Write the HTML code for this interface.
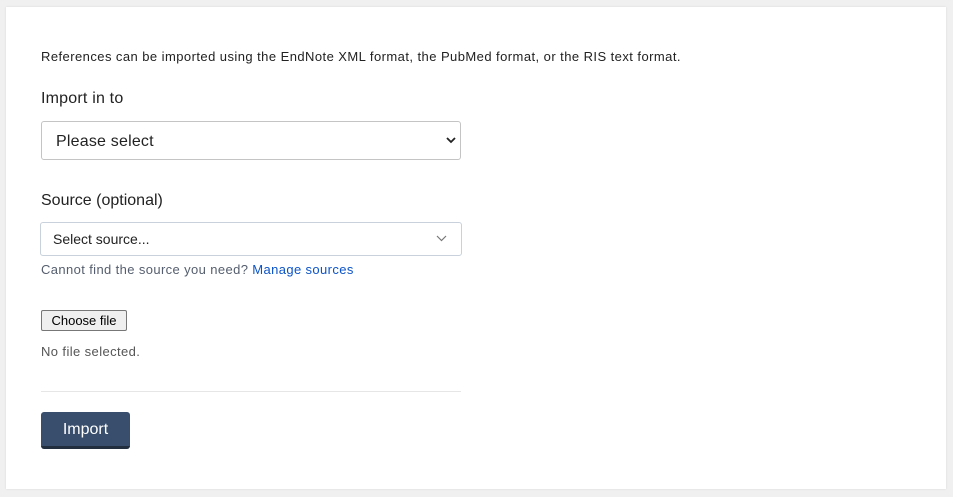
<!DOCTYPE html>
<html><head><style>
body{margin:0;width:953px;height:497px;background:#f0f0f0;font-family:"Liberation Sans",sans-serif;position:relative;overflow:hidden}
.card{position:absolute;left:6px;top:7px;width:940px;height:482px;background:#fff;box-shadow:0 0 2px rgba(0,0,0,.1)}
.a{position:absolute;white-space:nowrap}
</style></head><body>
<div class="card"></div>
<div class="a" style="left:41px;top:49px;font-size:13px;color:#222;letter-spacing:0.44px">References can be imported using the EndNote XML format, the PubMed format, or the RIS text format.</div>
<div class="a" style="left:41px;top:90px;font-size:16px;color:#222;letter-spacing:0.2px">Import in to</div>
<div class="a" style="left:41px;top:121px;width:418px;height:37px;border:1px solid #c4c4c4;border-radius:3px;"></div>
<div class="a" style="left:56px;top:133px;font-size:16px;color:#222;letter-spacing:0.2px">Please select</div>
<svg class="a" style="left:446px;top:136px" width="10" height="8"><path d="M1 2l4 4 4-4" stroke="#222" stroke-width="1.8" fill="none"/></svg>
<div class="a" style="left:41px;top:192px;font-size:16px;color:#222">Source (optional)</div>
<div class="a" style="left:40px;top:222px;width:420px;height:32px;border:1px solid #c8d1dc;border-radius:3px;"></div>
<div class="a" style="left:53px;top:231px;font-size:14px;color:#222">Select source...</div>
<svg class="a" style="left:436px;top:235px" width="11" height="7"><path d="M1 1l4.5 4.5L10 1" stroke="#777" stroke-width="1.2" fill="none"/></svg>
<div class="a" style="left:41px;top:262px;font-size:13px;color:#555e6e;letter-spacing:0.38px">Cannot find the source you need? <span style="color:#0b53c9">Manage sources</span></div>
<div class="a" style="left:41px;top:310px;width:84px;height:19px;border:1px solid #777;border-radius:2px;background:#efefef;font-size:13px;color:#000;text-align:center;line-height:19px">Choose file</div>
<div class="a" style="left:41px;top:344px;font-size:13px;color:#555;letter-spacing:0.4px">No file selected.</div>
<div class="a" style="left:41px;top:391px;width:420px;height:1px;background:#e6e6e6"></div>
<div class="a" style="left:41px;top:412px;width:89px;height:34px;background:#384e6c;border-bottom:3px solid #222d3d;border-radius:3px;color:#fff;font-size:16px;text-align:center;line-height:35px">Import</div>
</body></html>
